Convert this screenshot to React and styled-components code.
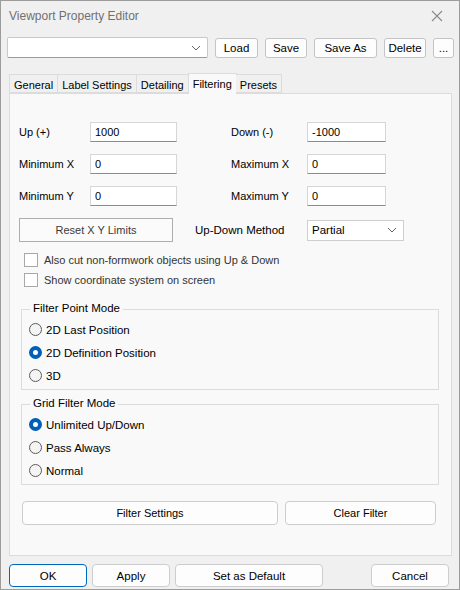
import React, { useState } from 'react';
import styled, { createGlobalStyle } from 'styled-components';

const GlobalStyle = createGlobalStyle`
    body {
        margin: 0;
        background: #ffffff;
    }
    * {
        box-sizing: border-box;
    }
`;

const SEGOE = `"Liberation Sans", Arial, sans-serif`;
const MSSANS = `"Liberation Sans", Arial, sans-serif`;

function Chevron() {
    return (
        <svg width="10" height="6" viewBox="0 0 10 6">
            <path d="M1 1 L5 5 L9 1" fill="none" stroke="#606060" strokeWidth="1" />
        </svg>
    );
}

function App() {
    const [tab] = useState('Filtering');
    const [pointMode, setPointMode] = useState('def');
    const [gridMode, setGridMode] = useState('unlimited');
    const tabs = ['General', 'Label Settings', 'Detailing', 'Filtering', 'Presets'];
    const fields = [
        ['Up (+)', '1000', 'Down (-)', '-1000'],
        ['Minimum X', '0', 'Maximum X', '0'],
        ['Minimum Y', '0', 'Maximum Y', '0'],
    ];
    const pointOptions = [
        ['last', '2D Last Position'],
        ['def', '2D Definition Position'],
        ['3d', '3D'],
    ];
    const gridOptions = [
        ['unlimited', 'Unlimited Up/Down'],
        ['pass', 'Pass Always'],
        ['normal', 'Normal'],
    ];
    return (
        <>
            <GlobalStyle />
            <Window>
                <TitleBar>
                    <Title>Viewport Property Editor</Title>
                    <CloseButton>
                        <svg width="12" height="12" viewBox="0 0 12 12">
                            <path d="M1 1 L11 11 M11 1 L1 11" stroke="#8a8a8a" strokeWidth="1.1" />
                        </svg>
                    </CloseButton>
                </TitleBar>
                <Toolbar>
                    <Combo>
                        <Chevron />
                    </Combo>
                    <ToolButton width={43}>Load</ToolButton>
                    <ToolButton width={42}>Save</ToolButton>
                    <ToolButton width={63}>Save As</ToolButton>
                    <ToolButton width={42}>Delete</ToolButton>
                    <ToolButton width={21}>...</ToolButton>
                </Toolbar>
                <TabStrip>
                    {tabs.map((t) => (
                        <Tab key={t} active={t === tab}>{t}</Tab>
                    ))}
                </TabStrip>
                <Panel>
                    <FieldGrid>
                        {fields.map((row) => (
                            <React.Fragment key={row[0]}>
                                <FieldLabel>{row[0]}</FieldLabel>
                                <TextBox>{row[1]}</TextBox>
                                <span />
                                <FieldLabel>{row[2]}</FieldLabel>
                                <TextBox>{row[3]}</TextBox>
                            </React.Fragment>
                        ))}
                    </FieldGrid>
                    <MethodRow>
                        <FlatButton>Reset X Y Limits</FlatButton>
                        <MethodLabel>Up-Down Method</MethodLabel>
                        <Select>
                            <span>Partial</span>
                            <Chevron />
                        </Select>
                    </MethodRow>
                    <CheckList>
                        <CheckRow>
                            <CheckBox />
                            <CheckText>Also cut non-formwork objects using Up &amp; Down</CheckText>
                        </CheckRow>
                        <CheckRow>
                            <CheckBox />
                            <CheckText>Show coordinate system on screen</CheckText>
                        </CheckRow>
                    </CheckList>
                    <GroupBox top={22}>
                        <Legend>Filter Point Mode</Legend>
                        {pointOptions.map(([id, label]) => (
                            <RadioRow key={id} onClick={() => setPointMode(id)}>
                                <Radio checked={pointMode === id} />
                                <RadioText>{label}</RadioText>
                            </RadioRow>
                        ))}
                    </GroupBox>
                    <GroupBox top={14}>
                        <Legend>Grid Filter Mode</Legend>
                        {gridOptions.map(([id, label]) => (
                            <RadioRow key={id} onClick={() => setGridMode(id)}>
                                <Radio checked={gridMode === id} />
                                <RadioText>{label}</RadioText>
                            </RadioRow>
                        ))}
                    </GroupBox>
                    <FilterRow>
                        <RoundButton width={256}>Filter Settings</RoundButton>
                        <RoundButton width={151}>Clear Filter</RoundButton>
                    </FilterRow>
                </Panel>
                <Footer>
                    <DialogButton width={78} primary>OK</DialogButton>
                    <DialogButton width={78}>Apply</DialogButton>
                    <DialogButton width={148}>Set as Default</DialogButton>
                    <Spacer />
                    <DialogButton width={78}>Cancel</DialogButton>
                </Footer>
            </Window>
        </>
    );
}

export default App;

const Window = styled.div`
    width: 460px;
    height: 590px;
    border: 1px solid #9c9c9c;
    background: #f0f0f0;
    display: flex;
    flex-direction: column;
    font-family: ${MSSANS};
    font-size: 11px;
    color: #000;
`;
const TitleBar = styled.div`
    height: 30px;
    display: flex;
    align-items: center;
    padding: 0 16px 0 8px;
`;
const Title = styled.div`
    flex: 1;
    font-family: ${SEGOE};
    font-size: 12px;
    color: #707070;
`;
const CloseButton = styled.div`
    display: flex;
    align-items: center;
`;
const Toolbar = styled.div`
    display: flex;
    align-items: center;
    gap: 7px;
    margin-top: 6px;
    padding: 0 0 0 6px;
    height: 21px;
`;
const Combo = styled.div`
    width: 201px;
    height: 21px;
    background: #fff;
    border: 1px solid #c9c9c9;
    border-bottom-color: #9a9a9a;
    border-radius: 2px;
    display: flex;
    align-items: center;
    justify-content: flex-end;
    padding-right: 6px;
`;
const ToolButton = styled.div`
    width: ${(p) => p.width}px;
    height: 20px;
    border: 1px solid #c4c4c4;
    border-radius: 3px;
    background: #fdfdfd;
    display: flex;
    align-items: center;
    justify-content: center;
    font-size: 11.5px;
`;
const TabStrip = styled.div`
    display: flex;
    align-items: flex-end;
    margin: 15px 0 0 8px;
    height: 20px;
    position: relative;
    z-index: 1;
`;
const Tab = styled.div`
    height: ${(p) => (p.active ? 21 : 19)}px;
    margin-bottom: ${(p) => (p.active ? -1 : 0)}px;
    padding: 0 ${(p) => (p.active ? 4 : 4)}px;
    margin-left: ${(p) => (p.active ? -1 : 0)}px;
    margin-right: ${(p) => (p.active ? -1 : 0)}px;
    background: ${(p) => (p.active ? '#f9f9f9' : '#f0f0f0')};
    border: 1px solid #dcdcdc;
    border-bottom: ${(p) => (p.active ? 'none' : '1px solid #dcdcdc')};
    border-left-width: ${(p) => (p.active ? 1 : 0)}px;
    display: flex;
    align-items: center;
    font-family: ${SEGOE};
    font-size: 11px;
    padding-top: ${(p) => (p.active ? 0 : 2)}px;
    &:first-child {
        border-left-width: 1px;
    }
`;
const Panel = styled.div`
    margin: 0 7px 0 8px;
    height: 463px;
    background: #f9f9f9;
    border: 1px solid #dcdcdc;
    padding: 28px 0 0 9px;
    display: flex;
    flex-direction: column;
`;
const FieldGrid = styled.div`
    display: grid;
    grid-template-columns: 71px 87px 54px 76px 79px;
    grid-auto-rows: 20px;
    row-gap: 12px;
    align-items: center;
`;
const FieldLabel = styled.div`
    font-size: 11px;
`;
const TextBox = styled.div`
    height: 20px;
    background: #fff;
    border: 1px solid #d6d6d6;
    border-bottom-color: #8c8c8c;
    padding: 0 0 0 4px;
    display: flex;
    align-items: center;
    font-size: 11px;
`;
const MethodRow = styled.div`
    display: flex;
    align-items: center;
    margin-top: 12px;
    height: 24px;
`;
const FlatButton = styled.div`
    width: 154px;
    height: 24px;
    border: 1px solid #adadad;
    background: #fbfbfb;
    display: flex;
    align-items: center;
    justify-content: center;
    font-size: 11px;
    color: #3a3a3a;
`;
const MethodLabel = styled.div`
    margin-left: 22px;
    width: 112px;
    font-family: ${SEGOE};
    font-size: 11.5px;
`;
const Select = styled.div`
    width: 97px;
    height: 21px;
    background: #fff;
    border: 1px solid #cfcfcf;
    display: flex;
    align-items: center;
    justify-content: space-between;
    padding: 0 6px 0 4px;
    font-family: ${SEGOE};
    font-size: 11.5px;
`;
const CheckList = styled.div`
    display: flex;
    flex-direction: column;
    gap: 6px;
    margin: 11px 0 0 5px;
`;
const CheckRow = styled.div`
    display: flex;
    align-items: center;
    height: 14px;
`;
const CheckBox = styled.div`
    width: 14px;
    height: 14px;
    border: 1px solid #a8a8a8;
    background: #fff;
`;
const CheckText = styled.div`
    margin-left: 6px;
    font-size: 11px;
    color: #333;
`;
const GroupBox = styled.div`
    position: relative;
    width: 418px;
    margin: ${(p) => p.top}px 0 0 2px;
    border: 1px solid #dcdcdc;
    height: 81px;
    padding: 13px 0 0 7px;
    display: flex;
    flex-direction: column;
    gap: 10px;
`;
const Legend = styled.div`
    position: absolute;
    top: -8px;
    left: 8px;
    padding: 0 3px;
    background: #f9f9f9;
    font-family: ${SEGOE};
    font-size: 11.5px;
`;
const RadioRow = styled.div`
    display: flex;
    align-items: center;
    height: 13px;
    cursor: default;
`;
const Radio = styled.div`
    width: 13px;
    height: 13px;
    border-radius: 50%;
    border: ${(p) => (p.checked ? '4px solid #005fb8' : '1px solid #5a5a5a')};
    background: ${(p) => (p.checked ? '#fff' : '#f4f4f4')};
`;
const RadioText = styled.div`
    margin-left: 4px;
    font-family: ${SEGOE};
    font-size: 11.5px;
`;
const FilterRow = styled.div`
    display: flex;
    gap: 7px;
    margin: 16px 0 0 3px;
`;
const RoundButton = styled.div`
    width: ${(p) => p.width}px;
    height: 24px;
    border: 1px solid #cdcdcd;
    border-radius: 4px;
    background: #fdfdfd;
    display: flex;
    align-items: center;
    justify-content: center;
    font-size: 11px;
`;
const Footer = styled.div`
    display: flex;
    gap: 5px;
    margin-top: 8px;
    padding: 0 10px 0 8px;
`;
const Spacer = styled.div`
    flex: 1;
`;
const DialogButton = styled.div`
    width: ${(p) => p.width}px;
    height: 23px;
    border: 1px solid ${(p) => (p.primary ? '#0067c0' : '#cdcdcd')};
    border-radius: 4px;
    background: #fdfdfd;
    display: flex;
    align-items: center;
    justify-content: center;
    font-size: 11.5px;
`;
